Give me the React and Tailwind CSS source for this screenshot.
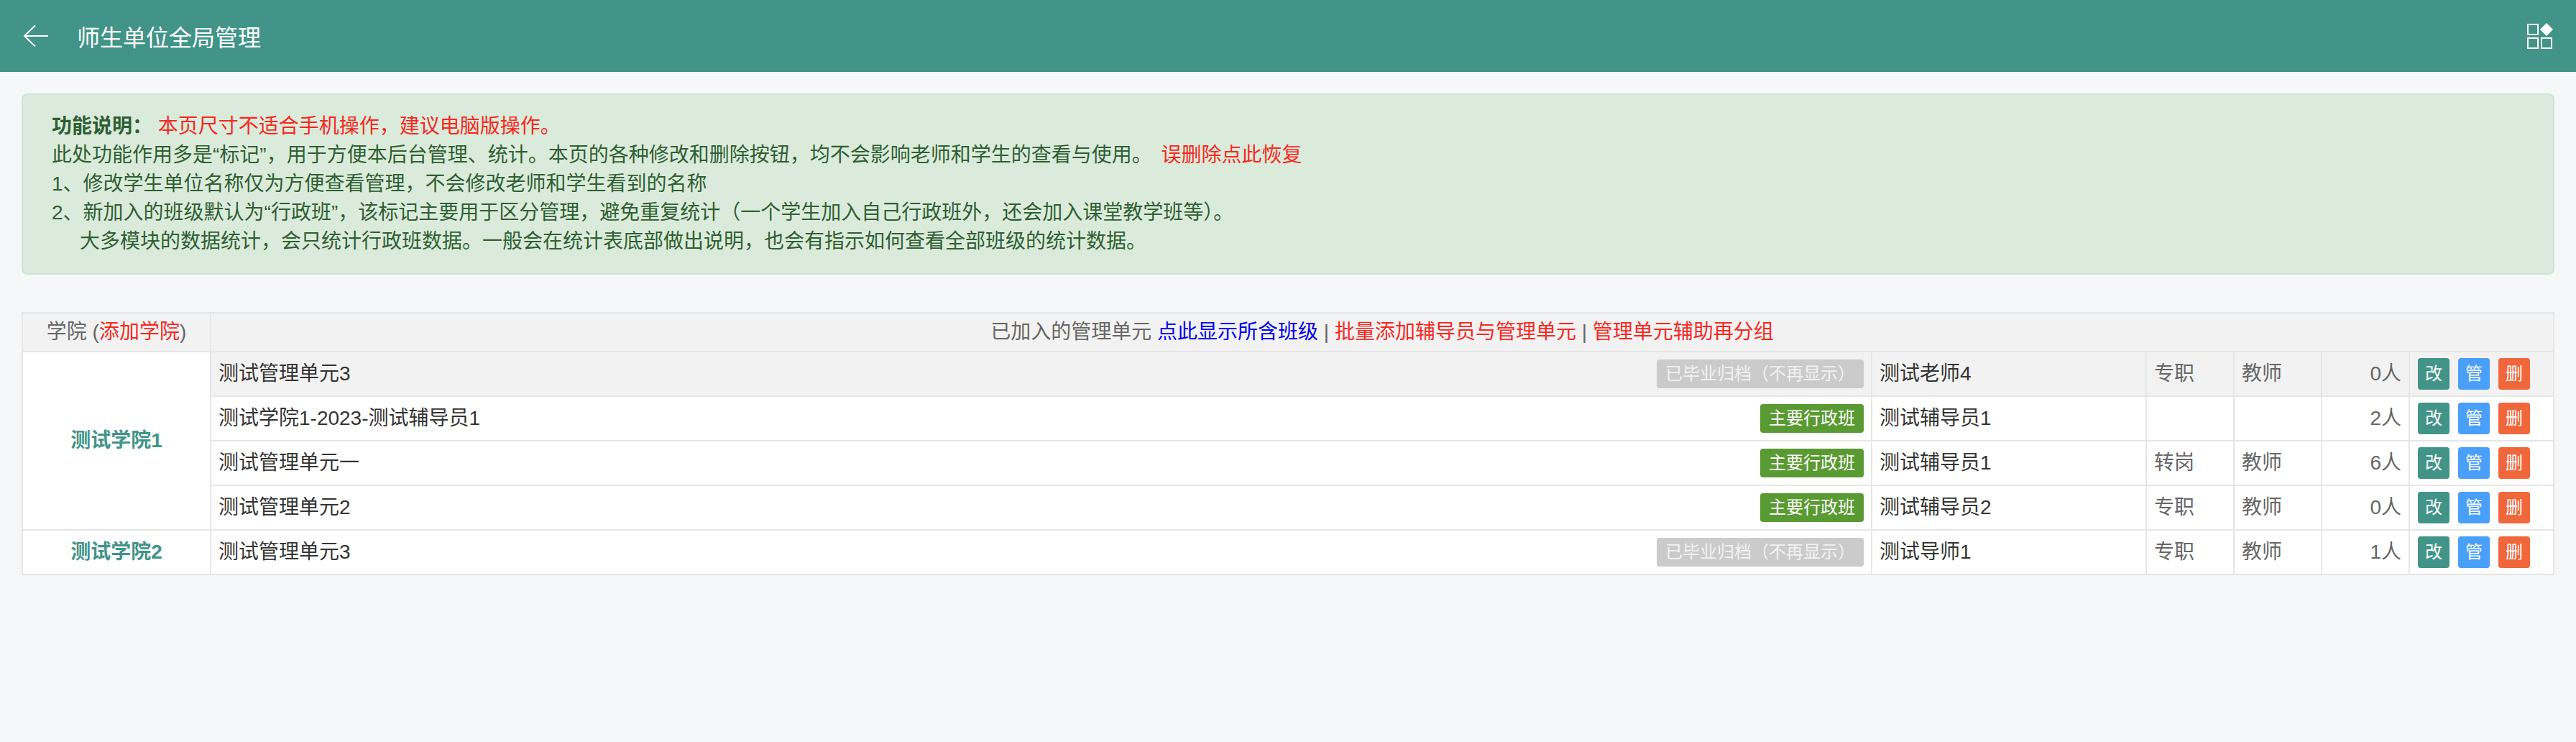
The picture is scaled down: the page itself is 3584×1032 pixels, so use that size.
import React from 'react';

const rows = [
  { name: '测试管理单元3', archived: true, teacher: '测试老师4', kind: '专职', title: '教师', count: '0人' },
  { name: '测试学院1-2023-测试辅导员1', teacher: '测试辅导员1', kind: '', title: '', count: '2人' },
  { name: '测试管理单元一', teacher: '测试辅导员1', kind: '转岗', title: '教师', count: '6人' },
  { name: '测试管理单元2', teacher: '测试辅导员2', kind: '专职', title: '教师', count: '0人' },
];

const cell = 'border-2 border-[#e6e6e6] px-[10px] py-0';

function Badge({ archived }) {
  return archived ? (
    <span className="block h-10 w-[288px] rounded bg-[#cbcbcb] px-3 text-[24px] leading-10 text-[#f2f2f2]">已毕业归档（不再显示）</span>
  ) : (
    <span className="block h-10 w-[144px] rounded bg-[#5a9a32] px-3 text-[24px] leading-10 text-white">主要行政班</span>
  );
}

function Row({ row, college, span, shaded }) {
  return (
    <tr className={`h-[62px] ${shaded ? 'bg-[#f2f2f2]' : 'bg-white'}`}>
      {college && (
        <td rowSpan={span} className={`${cell} bg-white text-center font-bold text-[#429488]`}>
          {college}
        </td>
      )}
      <td className={`${cell} text-[#333333]`}>
        <div className="flex items-center justify-between">
          <span>{row.name}</span>
          <Badge archived={row.archived} />
        </div>
      </td>
      <td className={`${cell} text-[#333333]`}>{row.teacher}</td>
      <td className={`${cell} text-[#666666]`}>{row.kind}</td>
      <td className={`${cell} text-[#666666]`}>{row.title}</td>
      <td className={`${cell} text-right text-[#666666]`}>{row.count}</td>
      <td className={cell}>
        <div className="flex gap-3 pl-[1px] text-[24px] text-white">
          <span className="h-11 w-11 rounded bg-[#429488] text-center leading-11">改</span>
          <span className="h-11 w-11 rounded bg-[#4a9ffa] text-center leading-11">管</span>
          <span className="h-11 w-11 rounded bg-[#ef673a] text-center leading-11">删</span>
        </div>
      </td>
    </tr>
  );
}

export default function App() {
  return (
    <div
      lang="zh-CN"
      className="min-h-screen bg-[#f6f7f9] text-[28px] font-['Liberation_Sans','Noto_Sans_CJK_SC',sans-serif]"
    >
      <header className="flex h-[100px] items-center justify-between bg-[#429488] pl-[32px] pr-[32px] text-white">
        <div className="flex items-center">
          <svg width="36" height="32" viewBox="0 0 36 32" fill="none" stroke="white" strokeWidth="2">
            <path d="M35 16H2M17 1.5 2 16l15 14.5" />
          </svg>
          <span className="ml-[39px] mt-[6px] text-[32px]">师生单位全局管理</span>
        </div>
        <svg width="36" height="36" viewBox="0 0 36 36" fill="none" stroke="white" strokeWidth="2">
          <rect x="1" y="2" width="14" height="14" />
          <rect x="1" y="21" width="14" height="14" />
          <rect x="20" y="21" width="14" height="14" />
          <path d="M27 0l9 9-9 9-9-9z" fill="white" stroke="none" />
        </svg>
      </header>

      <main className="px-[30px] pt-[30px]">
        <div className="rounded-lg border-2 border-[#cfe6d3] bg-[#dbebdb] px-10 pb-6 pt-6 leading-10 text-[#2f5f33]">
          <p>
            <b>功能说明：</b> <span className="text-[#f5281e]">本页尺寸不适合手机操作，建议电脑版操作。</span>
          </p>
          <p>
            此处功能作用多是“标记”，用于方便本后台管理、统计。本页的各种修改和删除按钮，均不会影响老师和学生的查看与使用。{' '}
            <span className="ml-[5px] text-[#f5281e]">误删除点此恢复</span>
          </p>
          <p>1、修改学生单位名称仅为方便查看管理，不会修改老师和学生看到的名称</p>
          <p>2、新加入的班级默认为“行政班”，该标记主要用于区分管理，避免重复统计（一个学生加入自己行政班外，还会加入课堂教学班等）。</p>
          <p>&nbsp;&nbsp;&nbsp;&nbsp;&nbsp;大多模块的数据统计，会只统计行政班数据。一般会在统计表底部做出说明，也会有指示如何查看全部班级的统计数据。</p>
        </div>

        <table className="mt-[52px] w-[3524px] table-fixed border-collapse">
          <colgroup>
            <col className="w-[262px]" />
            <col className="w-[2311px]" />
            <col className="w-[382px]" />
            <col className="w-[122px]" />
            <col className="w-[122px]" />
            <col className="w-[122px]" />
            <col className="w-[201px]" />
          </colgroup>
          <tbody>
            <tr className="h-[54px] bg-[#f2f2f2] text-[#666666]">
              <td className={`${cell} text-center`}>
                学院 (<span className="text-[#f5281e]">添加学院</span>)
              </td>
              <td colSpan={6} className={`${cell} text-center`}>
                已加入的管理单元 <span className="text-[#0000f0]">点此显示所含班级</span> |{' '}
                <span className="text-[#f5281e]">批量添加辅导员与管理单元</span> |{' '}
                <span className="text-[#f5281e]">管理单元辅助再分组</span>
              </td>
            </tr>
            {rows.map((r, i) => (
              <Row key={i} row={r} shaded={r.archived} college={i === 0 ? '测试学院1' : null} span={4} />
            ))}
            <Row
              row={{ name: '测试管理单元3', archived: true, teacher: '测试导师1', kind: '专职', title: '教师', count: '1人' }}
              college="测试学院2"
              span={1}
            />
          </tbody>
        </table>
      </main>
    </div>
  );
}
